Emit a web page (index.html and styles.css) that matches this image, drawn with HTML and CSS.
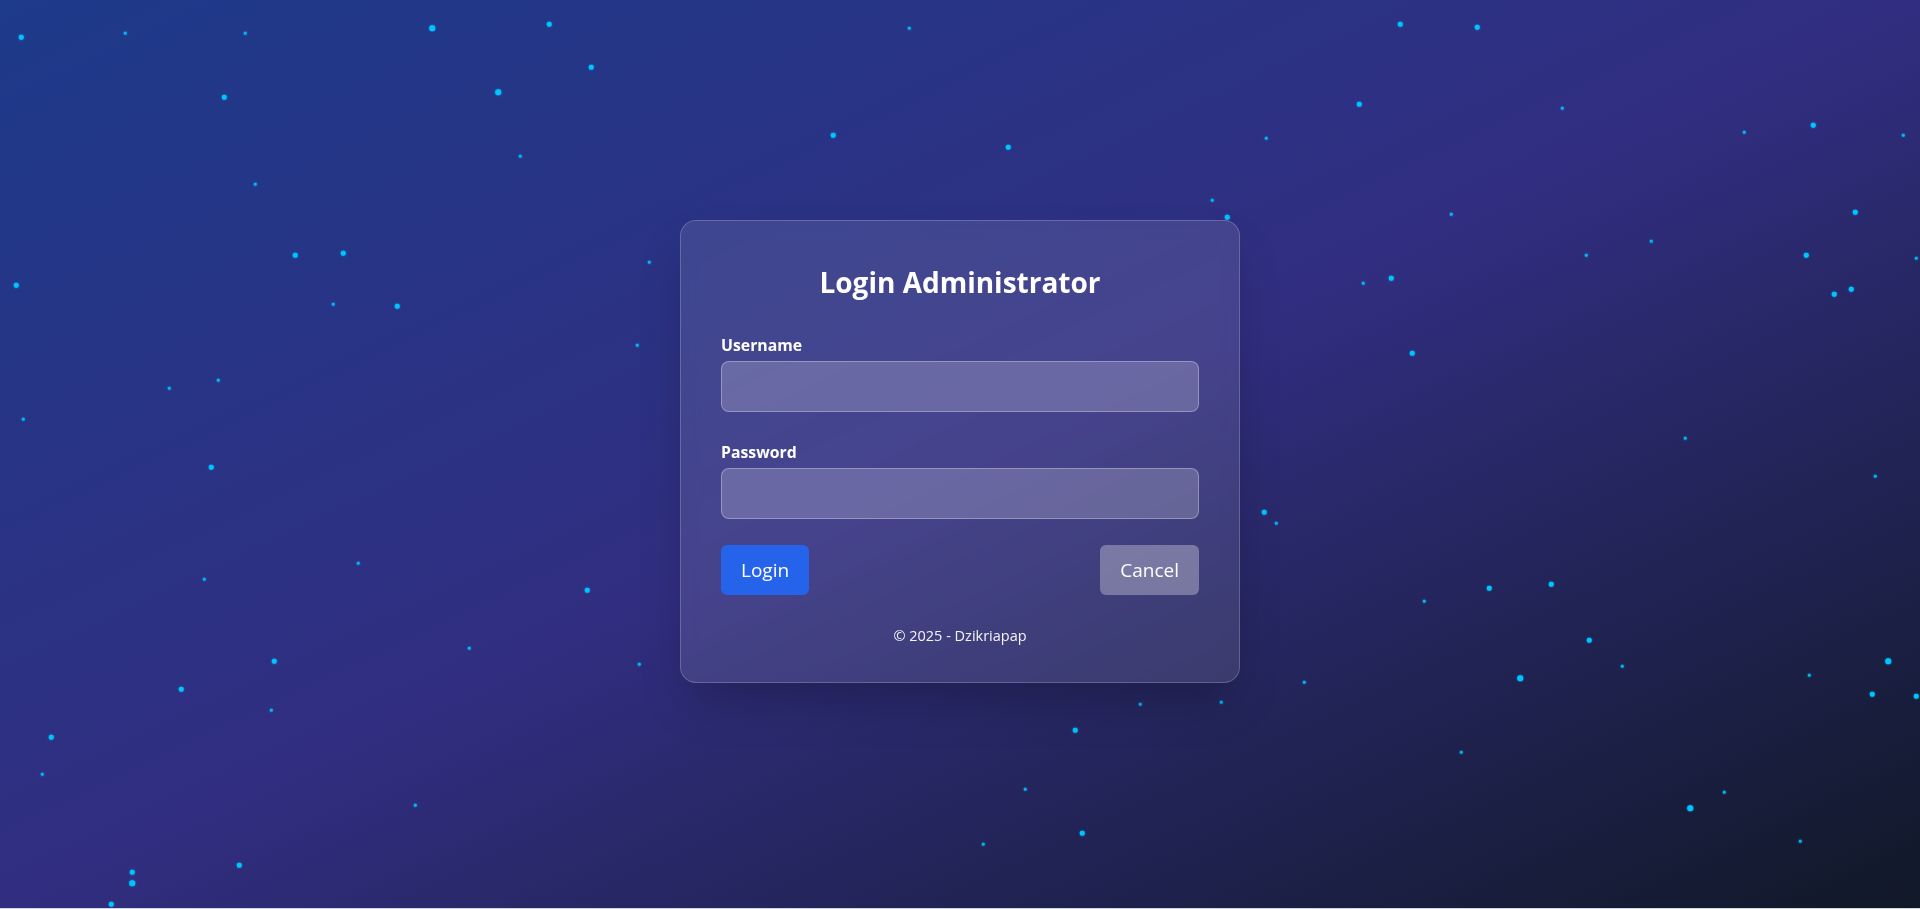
FILE: index.html
```html
<!DOCTYPE html>
<html lang="id">
<head>
<meta charset="utf-8">
<title>Login Administrator</title>
<link rel="stylesheet" href="styles.css">
</head>
<body>
<div class="sky">
  <div class="stars" aria-hidden="true">
    <span class="star m" style="left:21px;top:37px"></span>
    <span class="star s" style="left:125px;top:33px"></span>
    <span class="star s" style="left:245px;top:33px"></span>
    <span class="star l" style="left:432px;top:28px"></span>
    <span class="star m" style="left:549px;top:24px"></span>
    <span class="star m" style="left:591px;top:67px"></span>
    <span class="star l" style="left:498px;top:92px"></span>
    <span class="star m" style="left:224px;top:97px"></span>
    <span class="star s" style="left:520px;top:156px"></span>
    <span class="star s" style="left:255px;top:184px"></span>
    <span class="star s" style="left:909px;top:28px"></span>
    <span class="star m" style="left:833px;top:135px"></span>
    <span class="star m" style="left:1008px;top:147px"></span>
    <span class="star m" style="left:1400px;top:24px"></span>
    <span class="star m" style="left:1477px;top:27px"></span>
    <span class="star m" style="left:1359px;top:104px"></span>
    <span class="star s" style="left:1562px;top:108px"></span>
    <span class="star s" style="left:1266px;top:138px"></span>
    <span class="star s" style="left:1744px;top:132px"></span>
    <span class="star m" style="left:1813px;top:125px"></span>
    <span class="star s" style="left:1903px;top:135px"></span>
    <span class="star s" style="left:1212px;top:200px"></span>
    <span class="star m" style="left:1227px;top:217px"></span>
    <span class="star s" style="left:1451px;top:214px"></span>
    <span class="star m" style="left:1855px;top:212px"></span>
    <span class="star s" style="left:1651px;top:241px"></span>
    <span class="star s" style="left:1586px;top:255px"></span>
    <span class="star m" style="left:1806px;top:255px"></span>
    <span class="star s" style="left:1916px;top:258px"></span>
    <span class="star m" style="left:295px;top:255px"></span>
    <span class="star m" style="left:343px;top:253px"></span>
    <span class="star s" style="left:649px;top:262px"></span>
    <span class="star s" style="left:333px;top:304px"></span>
    <span class="star m" style="left:397px;top:306px"></span>
    <span class="star m" style="left:16px;top:285px"></span>
    <span class="star s" style="left:1363px;top:283px"></span>
    <span class="star m" style="left:1391px;top:278px"></span>
    <span class="star m" style="left:1834px;top:294px"></span>
    <span class="star m" style="left:1851px;top:289px"></span>
    <span class="star s" style="left:637px;top:345px"></span>
    <span class="star m" style="left:1412px;top:353px"></span>
    <span class="star s" style="left:218px;top:380px"></span>
    <span class="star s" style="left:169px;top:388px"></span>
    <span class="star s" style="left:23px;top:419px"></span>
    <span class="star s" style="left:1685px;top:438px"></span>
    <span class="star m" style="left:211px;top:467px"></span>
    <span class="star s" style="left:1875px;top:476px"></span>
    <span class="star m" style="left:1264px;top:512px"></span>
    <span class="star s" style="left:1276px;top:523px"></span>
    <span class="star s" style="left:358px;top:563px"></span>
    <span class="star s" style="left:204px;top:579px"></span>
    <span class="star m" style="left:587px;top:590px"></span>
    <span class="star s" style="left:1424px;top:601px"></span>
    <span class="star m" style="left:1489px;top:588px"></span>
    <span class="star m" style="left:1551px;top:584px"></span>
    <span class="star m" style="left:1589px;top:640px"></span>
    <span class="star s" style="left:1622px;top:666px"></span>
    <span class="star s" style="left:639px;top:664px"></span>
    <span class="star m" style="left:274px;top:661px"></span>
    <span class="star m" style="left:181px;top:689px"></span>
    <span class="star s" style="left:271px;top:710px"></span>
    <span class="star s" style="left:469px;top:648px"></span>
    <span class="star s" style="left:1304px;top:682px"></span>
    <span class="star l" style="left:1520px;top:678px"></span>
    <span class="star s" style="left:1809px;top:675px"></span>
    <span class="star l" style="left:1888px;top:661px"></span>
    <span class="star m" style="left:1872px;top:694px"></span>
    <span class="star m" style="left:1916px;top:696px"></span>
    <span class="star s" style="left:1221px;top:702px"></span>
    <span class="star s" style="left:1140px;top:704px"></span>
    <span class="star m" style="left:1075px;top:730px"></span>
    <span class="star m" style="left:51px;top:737px"></span>
    <span class="star s" style="left:42px;top:774px"></span>
    <span class="star s" style="left:1461px;top:752px"></span>
    <span class="star s" style="left:415px;top:805px"></span>
    <span class="star s" style="left:1025px;top:789px"></span>
    <span class="star s" style="left:1724px;top:792px"></span>
    <span class="star l" style="left:1690px;top:808px"></span>
    <span class="star m" style="left:1082px;top:833px"></span>
    <span class="star s" style="left:983px;top:844px"></span>
    <span class="star s" style="left:1800px;top:841px"></span>
    <span class="star m" style="left:239px;top:865px"></span>
    <span class="star m" style="left:132px;top:872px"></span>
    <span class="star l" style="left:132px;top:883px"></span>
    <span class="star m" style="left:111px;top:904px"></span>
  </div>
  <main class="card">
    <h1 class="title">Login Administrator</h1>
    <form class="form">
      <div class="field">
        <label class="label" for="username">Username</label>
        <input class="input" id="username" type="text">
      </div>
      <div class="field">
        <label class="label" for="password">Password</label>
        <input class="input" id="password" type="password">
      </div>
      <div class="actions">
        <button class="btn btn-primary" type="button">Login</button>
        <button class="btn btn-secondary" type="button">Cancel</button>
      </div>
    </form>
    <p class="footer">© 2025 - Dzikriapap</p>
  </main>
</div>
</body>
</html>
```
FILE: styles.css
```css
html { background: #d4d8dd; }
body { margin: 0; font-family: "Open Sans", "Noto Sans", sans-serif; }
.sky {
  position: relative;
  height: 908px;
  overflow: hidden;
  display: flex;
  align-items: center;
  justify-content: center;
  padding-bottom: 5px;
  box-sizing: border-box;
  background: linear-gradient(to bottom right, #1e3a8a, #312e81, #111827);
}
.stars { position: absolute; inset: 0; pointer-events: none; }
.star {
  position: absolute;
  border-radius: 50%;
  background: #00c4ff;
  transform: translate(-50%, -50%);
  box-shadow: 0 0 2px rgba(0, 196, 255, 0.8);
}
.star.s { width: 2.5px; height: 2.5px; opacity: 0.9; }
.star.m { width: 4.5px; height: 4.5px; }
.star.l { width: 5.5px; height: 5.5px; }
.card {
  position: relative;
  z-index: 1;
  width: 560px;
  box-sizing: border-box;
  padding: 40px 40px 38px;
  border: 1px solid rgba(255,255,255,0.2);
  border-radius: 16px;
  background: rgba(255,255,255,0.1);
  backdrop-filter: blur(8px);
  box-shadow: 0 25px 50px -12px rgba(0,0,0,0.25);
  color: #fff;
}
.title { margin: 3px 0 33px; font-size: 28px; line-height: 36px; font-weight: 700; text-align: center; }
.form { display: flex; flex-direction: column; gap: 28px; }
.field { display: flex; flex-direction: column; gap: 4px; }
.label { font-size: 15.8px; line-height: 24px; font-weight: 700; }
.input {
  display: block;
  width: 100%;
  box-sizing: border-box;
  height: 51px;
  margin: 0;
  border-radius: 8px;
  border: 1px solid rgba(255,255,255,0.3);
  background: rgba(255,255,255,0.2);
}
.actions { display: flex; justify-content: space-between; margin-top: -2px; }
.btn {
  height: 50px;
  padding: 0 20px;
  border: 0;
  border-radius: 6px;
  color: #fff;
  font-family: inherit;
  font-size: 19px;
}
.btn-primary { background: #2563eb; }
.btn-secondary { background: rgba(255,255,255,0.3); }
.footer { margin: 33px 0 0; text-align: center; font-size: 14.5px; line-height: 16px; color: rgba(255,255,255,0.94); }
```
